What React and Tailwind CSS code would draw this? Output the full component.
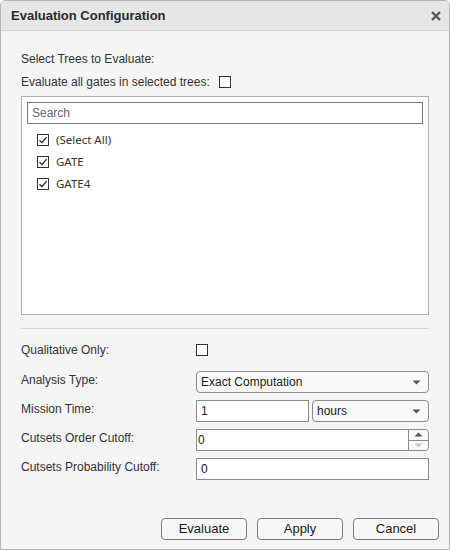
import React from "react";

const Check = () => (
  <svg width="10" height="10" viewBox="0 0 10 10" className="block">
    <path d="M1.5 5.2 L4 7.6 L8.6 2.2" fill="none" stroke="#222" strokeWidth="1.3" />
  </svg>
);

const CheckBox = ({ checked }) => (
  <div className="w-[12px] h-[12px] border border-[#333] bg-white flex items-center justify-center shrink-0">
    {checked && <Check />}
  </div>
);

const Caret = () => (
  <svg width="9" height="5" viewBox="0 0 9 5" className="block">
    <path d="M0.5 0.5 L8.5 0.5 L4.5 4.5 Z" fill="#555" />
  </svg>
);

const Dropdown = ({ label, className }) => (
  <div
    className={
      "h-[22px] rounded-[4px] border border-[#8c8c8c] bg-[#f8f8f8] flex items-center justify-between pl-[4px] pr-[7px] text-[12px] text-[#222] " +
      className
    }
  >
    <span>{label}</span>
    <Caret />
  </div>
);

const Label = ({ children }) => (
  <div className="w-[175px] shrink-0 text-[12px] leading-[16px] text-[#333] pt-[1px]">{children}</div>
);

const Btn = ({ children }) => (
  <div className="w-[86px] h-[22px] rounded-[4px] border border-[#7a7a7a] bg-[#f7f7f7] flex items-center justify-center text-[13px] text-[#1a1a1a]">
    {children}
  </div>
);

export default function App() {
  return (
    <div
      className="w-[450px] h-[550px] bg-[#f5f5f5] border border-[#b4b4b4] rounded-t-[5px] flex flex-col overflow-hidden"
      style={{ fontFamily: '"Liberation Sans", Arial, sans-serif' }}
    >
      <div className="h-[30px] bg-[#e6e6e6] border-b border-[#d0d0d0] flex items-center justify-between pl-[10px] pr-[8px] shrink-0">
        <span className="text-[13px] font-bold text-[#2a2a2a]">Evaluation Configuration</span>
        <svg width="10" height="10" viewBox="0 0 10 10" className="block">
          <path d="M1 1 L9 9 M9 1 L1 9" stroke="#555" strokeWidth="2.4" />
        </svg>
      </div>

      <div className="flex flex-col flex-1 px-[20px] pt-[20px]">
        <div className="text-[12px] leading-[16px] text-[#333]">Select Trees to Evaluate:</div>
        <div className="mt-[7px] flex items-center gap-[9px] text-[12px] leading-[16px] text-[#333]">
          <span>Evaluate all gates in selected trees:</span>
          <CheckBox />
        </div>

        <div className="mt-[6px] h-[219px] border border-[#b0b0b0] bg-white p-[5px] flex flex-col">
          <div className="h-[22px] border border-[#7a7a7a] bg-white flex items-center pl-[4px] text-[12px] text-[#666]">
            Search
          </div>
          <div className="mt-[5px] flex flex-col" style={{ fontFamily: '"Noto Sans", "Open Sans", sans-serif' }}>
            {[
              "(Select All)",
              "GATE",
              "GATE4",
            ].map((t) => (
              <div key={t} className="h-[22px] flex items-center pl-[10px] gap-[7px] text-[11.5px] text-[#333]">
                <CheckBox checked />
                <span>{t}</span>
              </div>
            ))}
          </div>
        </div>

        <div className="mt-[13px] h-px bg-[#d4d4d4]" />

        <div className="mt-[10px] h-[22px] flex items-center">
          <div className="w-[175px] shrink-0 text-[12px] text-[#333]">Qualitative Only:</div>
          <CheckBox />
        </div>

        <div className="mt-[10px] flex items-start">
          <Label>Analysis Type:</Label>
          <Dropdown label="Exact Computation" className="flex-1" />
        </div>

        <div className="mt-[7px] flex items-start">
          <Label>Mission Time:</Label>
          <div className="flex-1 flex gap-[3px]">
            <div className="w-[113px] h-[22px] border border-[#8c8c8c] bg-white flex items-center pl-[4px] text-[12px] text-[#222]">
              1
            </div>
            <Dropdown label="hours" className="flex-1" />
          </div>
        </div>

        <div className="mt-[7px] flex items-start">
          <Label>Cutsets Order Cutoff:</Label>
          <div className="flex-1 h-[22px] border border-[#8c8c8c] rounded-r-[4px] bg-white flex">
            <div className="flex-1 flex items-center pl-[1px] text-[12px] text-[#222]">0</div>
            <div className="w-[20px] border-l border-[#8c8c8c] flex flex-col bg-[#f8f8f8] rounded-r-[4px]">
              <div className="flex-1 flex items-center justify-center border-b border-[#8c8c8c]">
                <svg width="9" height="5" viewBox="0 0 9 5" className="block">
                  <path d="M0.5 4.5 L8.5 4.5 L4.5 0.5 Z" fill="#555" />
                </svg>
              </div>
              <div className="flex-1 flex items-center justify-center">
                <svg width="9" height="5" viewBox="0 0 9 5" className="block">
                  <path d="M0.5 0.5 L8.5 0.5 L4.5 4.5 Z" fill="#c4c4c4" />
                </svg>
              </div>
            </div>
          </div>
        </div>

        <div className="mt-[7px] flex items-start">
          <Label>Cutsets Probability Cutoff:</Label>
          <div className="flex-1 h-[22px] border border-[#8c8c8c] bg-white flex items-center pl-[4px] text-[12px] text-[#222]">
            0
          </div>
        </div>

        <div className="mt-auto mb-[9px] -mr-[10px] flex justify-end gap-[10px]">
          <Btn>Evaluate</Btn>
          <Btn>Apply</Btn>
          <Btn>Cancel</Btn>
        </div>
      </div>
    </div>
  );
}
